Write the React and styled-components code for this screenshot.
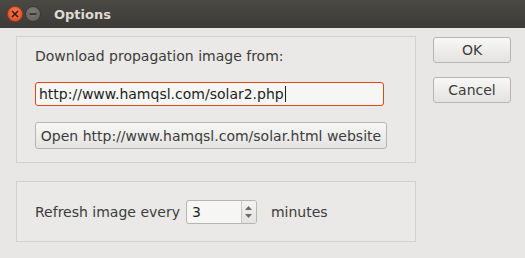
import React from "react";
import styled, { createGlobalStyle } from "styled-components";

const Global = createGlobalStyle`
  html, body {
    margin: 0;
    padding: 0;
    background: #e8e7e5;
  }
  * { box-sizing: border-box; }
`;

const Window = styled.div`
  width: 525px;
  height: 258px;
  background: #e8e7e5;
  font-family: "DejaVu Sans", "Open Sans", sans-serif;
  font-size: 14px;
  color: #3c3c3c;
  display: flex;
  flex-direction: column;
  overflow: hidden;
`;

const TitleBar = styled.div`
  height: 28px;
  background: linear-gradient(#4a4944, #3c3b37);
  display: flex;
  align-items: center;
  padding-left: 7px;
  gap: 2px;
`;

const WinButton = styled.div`
  width: 16px;
  height: 16px;
  border-radius: 50%;
  background: ${(p) =>
    p.close
      ? "radial-gradient(circle at 50% 35%, #f27a54, #dc4a1c)"
      : "radial-gradient(circle at 50% 35%, #7d7c77, #5e5d58)"};
  border: 1px solid ${(p) => (p.close ? "#a8391a" : "#3a3935")};
  display: flex;
  align-items: center;
  justify-content: center;
`;

const TitleText = styled.div`
  margin-left: 11px;
  color: #dfdbd2;
  font-weight: bold;
  font-size: 13px;
`;

const Body = styled.div`
  flex: 1;
  display: flex;
  padding: 8px 14px 0 16px;
  gap: 17px;
`;

const Column = styled.div`
  display: flex;
  flex-direction: column;
  gap: 18px;
  width: 400px;
`;

const Group = styled.div`
  border: 1px solid #d2d1ce;
  background: #eae9e7;
  height: ${(p) => p.h}px;
  padding: ${(p) => p.pad};
  display: flex;
  flex-direction: ${(p) => (p.row ? "row" : "column")};
  align-items: ${(p) => (p.row ? "center" : "flex-start")};
`;

const Label = styled.div`
  line-height: 16px;
  white-space: nowrap;
`;

const TextInput = styled.div`
  margin-top: 18px;
  width: 349px;
  height: 24px;
  border: 1px solid #dd4814;
  border-radius: 3px;
  background: #f6f6f5;
  display: flex;
  align-items: center;
  padding-left: 3px;
  color: #1e1e1e;
  white-space: nowrap;
`;

const Caret = styled.span`
  display: inline-block;
  width: 1px;
  height: 16px;
  background: #1e1e1e;
  margin-left: 1px;
`;

const Button = styled.div`
  width: ${(p) => p.w}px;
  height: ${(p) => p.h || 26}px;
  margin-top: ${(p) => p.mt || 0}px;
  border: 1px solid #b6b5b2;
  border-radius: 3px;
  background: linear-gradient(#f7f7f6, #e4e3e1);
  display: flex;
  align-items: center;
  justify-content: center;
  white-space: nowrap;
  color: #3c3c3c;
`;

const Side = styled.div`
  display: flex;
  flex-direction: column;
  gap: 14px;
  padding-top: 1px;
`;

const Spin = styled.div`
  margin: 0 14px 0 6px;
  width: 71px;
  height: 24px;
  border: 1px solid #b6b5b2;
  border-radius: 3px;
  background: #f6f6f5;
  display: flex;
  color: #1e1e1e;
`;

const SpinValue = styled.div`
  flex: 1;
  display: flex;
  align-items: center;
  padding-left: 5px;
`;

const SpinArrows = styled.div`
  width: 15px;
  border-left: 1px solid #c8c7c4;
  background: linear-gradient(#f3f3f2, #e4e3e1);
  border-radius: 0 2px 2px 0;
  display: flex;
  flex-direction: column;
  align-items: center;
  justify-content: center;
  gap: 4px;
`;

const Arrow = ({ down }) => (
  <svg width="7" height="4" viewBox="0 0 7 4">
    <path d={down ? "M0 0 L7 0 L3.5 4 Z" : "M0 4 L7 4 L3.5 0 Z"} fill="#6a6a68" />
  </svg>
);

export default function App() {
  return (
    <Window>
      <Global />
      <TitleBar>
        <WinButton close>
          <svg width="8" height="8" viewBox="0 0 8 8">
            <path d="M1 1 L7 7 M7 1 L1 7" stroke="#3a1a10" strokeWidth="1.6" />
          </svg>
        </WinButton>
        <WinButton>
          <svg width="8" height="8" viewBox="0 0 8 8">
            <path d="M0.5 4 L7.5 4" stroke="#2e2d2a" strokeWidth="1.6" />
          </svg>
        </WinButton>
        <TitleText>Options</TitleText>
      </TitleBar>
      <Body>
        <Column>
          <Group h={127} pad="11px 0 0 18px">
            <Label>Download propagation image from:</Label>
            <TextInput>
              http://www.hamqsl.com/solar2.php
              <Caret />
            </TextInput>
            <Button w={352} h={27} mt={16}>
              Open http://www.hamqsl.com/solar.html website
            </Button>
          </Group>
          <Group h={61} row pad="0 0 0 18px">
            <Label>Refresh image every</Label>
            <Spin>
              <SpinValue>3</SpinValue>
              <SpinArrows>
                <Arrow />
                <Arrow down />
              </SpinArrows>
            </Spin>
            <Label>minutes</Label>
          </Group>
        </Column>
        <Side>
          <Button w={78}>OK</Button>
          <Button w={78}>Cancel</Button>
        </Side>
      </Body>
    </Window>
  );
}
